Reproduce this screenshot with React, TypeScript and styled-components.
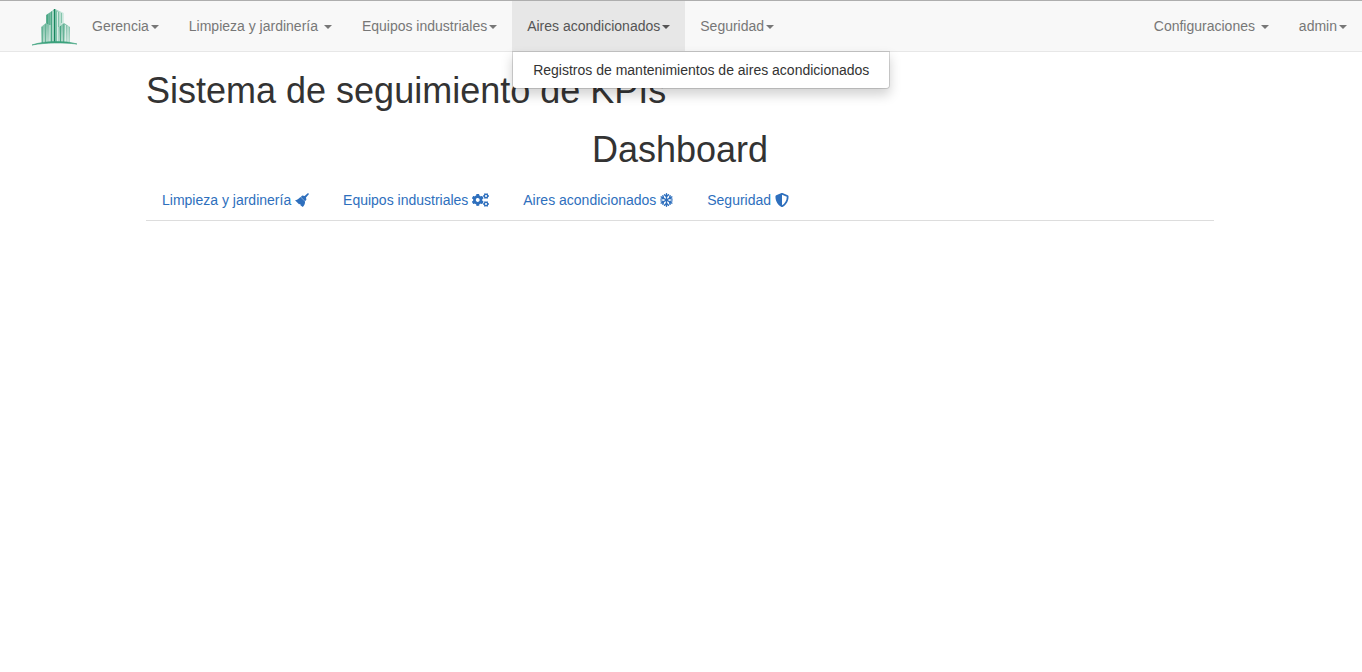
import React from "react";
import styled, { createGlobalStyle, css } from "styled-components";
import { FaCogs, FaShieldAlt } from "react-icons/fa";

const GlobalStyle = createGlobalStyle`
  *, *::before, *::after { box-sizing: border-box; }
  body {
    margin: 0;
    background: #fff;
    color: #333;
    font-family: "Helvetica Neue", Helvetica, "Liberation Sans", Arial, sans-serif;
    font-size: 14px;
    line-height: 20px;
  }
`;

const Navbar = styled.nav`
  display: flex;
  justify-content: space-between;
  background: #f8f8f8;
  border-top: 1px solid #aeaeae;
  border-bottom: 1px solid #e7e7e7;
`;

const NavGroup = styled.div`
  display: flex;
`;

const Brand = styled.a`
  display: block;
  height: 50px;
  padding: 7px 0 0 32px;

  svg {
    display: block;
  }
`;

const MenuList = styled.ul`
  display: flex;
  margin: 0;
  padding: 0;
  list-style: none;
`;

const MenuItem = styled.li`
  position: relative;
`;

const MenuToggle = styled.button<{ $open?: boolean }>`
  display: block;
  height: 50px;
  padding: 15px;
  border: 0;
  background: transparent;
  color: #777;
  font: inherit;
  white-space: pre;
  cursor: pointer;

  &:hover {
    color: #333;
  }

  ${(p) =>
    p.$open &&
    css`
      background: #e7e7e7;
      color: #555;
    `}
`;

const Caret = styled.span`
  display: inline-block;
  margin-left: 2px;
  vertical-align: middle;
  border-top: 4px solid;
  border-right: 4px solid transparent;
  border-left: 4px solid transparent;
`;

const Dropdown = styled.ul`
  position: absolute;
  top: 100%;
  left: 0;
  z-index: 10;
  margin: 0;
  padding: 5px 0;
  list-style: none;
  background: #fff;
  background-clip: padding-box;
  border: 1px solid rgba(0, 0, 0, 0.15);
  border-radius: 0 0 4px 4px;
  box-shadow: 0 6px 12px rgba(0, 0, 0, 0.175);
`;

const DropdownLink = styled.a`
  display: block;
  padding: 3px 20px;
  color: #333;
  text-decoration: none;
  white-space: nowrap;
`;

const Main = styled.main`
  padding: 19px 148px 0 146px;
`;

const Title = styled.h1<{ $centered?: boolean }>`
  margin: 0 0 ${(p) => (p.$centered ? 10 : 20)}px;
  font-size: 36px;
  line-height: 39px;
  font-weight: 400;
  text-align: ${(p) => (p.$centered ? "center" : "left")};
`;

const Tabs = styled.ul`
  display: flex;
  gap: 2px;
  margin: 0;
  padding: 0;
  list-style: none;
  border-bottom: 1px solid #ddd;
`;

const TabLink = styled.a<{ $iconWidth: number }>`
  display: block;
  padding: 10px 15px;
  border: 1px solid transparent;
  border-bottom: 0;
  color: #2e6fbd;
  text-decoration: none;
  white-space: nowrap;

  svg {
    width: ${(p) => p.$iconWidth}px;
    height: 14px;
    vertical-align: -2px;
  }
`;

const Logo = () => (
  <svg width="45" height="38" viewBox="0 0 45 38" aria-hidden="true">
    <defs>
      <linearGradient id="side" x1="0" y1="0" x2="0" y2="1">
        <stop offset="0" stopColor="#7dbfa7" />
        <stop offset="1" stopColor="#b9dccf" />
      </linearGradient>
      <linearGradient id="tower" x1="0" y1="0" x2="1" y2="0">
        <stop offset="0" stopColor="#5db193" />
        <stop offset="0.500" stopColor="#8ecab5" />
        <stop offset="1" stopColor="#dceee7" />
      </linearGradient>
    </defs>
    <path d="M14 7 23 1 32 5V35H14Z" fill="url(#tower)" />
    <path d="M9 19 14 15 18 17V35H9Z" fill="url(#side)" />
    <path d="M27 19 32 15 38 19V35H27Z" fill="url(#side)" />
    <g fill="none" strokeWidth="1">
      <path d="M22.500 1V35" stroke="#17875f" strokeWidth="1.400" />
      <path d="M15.500 6.500V16M19.500 3.500V35M28.500 18V35" stroke="#4aa684" />
      <path d="M10.500 19V35M13.500 16V35M17.500 5V17M31.500 16V35" stroke="#66b397" />
      <path d="M24.500 3V35M26.500 4V19M29.500 5V15" stroke="#73bca1" strokeWidth="0.800" />
      <path d="M18 17V35M21 3V35M25.500 4V35M33.500 17V35M36 18V35" stroke="#e3f2ec" strokeWidth="0.800" />
    </g>
    <path d="M0 37C11 33 32 32 45 36C31 34.500 14 34.500 0 37Z" fill="#3ba17c" stroke="#3ba17c" strokeWidth="0.600" />
  </svg>
);

const BroomIcon = () => (
  <svg viewBox="0 0 14 14" fill="currentColor" aria-hidden="true">
    <path d="M13 0 14 1 11 4.400 11.400 6.800 10 8.200 5.800 4 7.200 2.600 9.600 3Z" />
    <path d="M5.400 4 10 8.600C10.200 10.800 9.300 12.800 7.800 14L5.400 12.300 5.300 11 4 11.200 0 7.300C2 7.200 3.700 6 5.400 4Z" />
  </svg>
);

const snowflakeAngles = [0, 60, 120, 180, 240, 300];

const SnowflakeIcon = () => (
  <svg viewBox="0 0 13 14" fill="none" stroke="currentColor" strokeWidth="1.400" strokeLinecap="round" strokeLinejoin="round" aria-hidden="true">
    {snowflakeAngles.map((angle) => (
      <path key={angle} d="M6.500 7V0.800M4.500 1.700 6.500 3.700 8.500 1.700" transform={`rotate(${angle} 6.500 7)`} />
    ))}
  </svg>
);

const menus = [
  { label: "Gerencia" },
  { label: "Limpieza y jardinería " },
  { label: "Equipos industriales" },
  { label: "Aires acondicionados", items: ["Registros de mantenimientos de aires acondicionados"] },
  { label: "Seguridad" },
];

const userMenus = [{ label: "Configuraciones " }, { label: "admin" }];

const tabs = [
  { label: "Limpieza y jardinería", Icon: BroomIcon, iconWidth: 14 },
  { label: "Equipos industriales", Icon: FaCogs, iconWidth: 17 },
  { label: "Aires acondicionados", Icon: SnowflakeIcon, iconWidth: 13 },
  { label: "Seguridad", Icon: FaShieldAlt, iconWidth: 14 },
];

const Menu = ({ entries }: { entries: { label: string; items?: string[] }[] }) => (
  <MenuList>
    {entries.map(({ label, items }) => (
      <MenuItem key={label}>
        <MenuToggle type="button" aria-haspopup="true" aria-expanded={!!items} $open={!!items}>
          {label}
          <Caret />
        </MenuToggle>
        {items && (
          <Dropdown>
            {items.map((item) => (
              <li key={item}>
                <DropdownLink href="#">{item}</DropdownLink>
              </li>
            ))}
          </Dropdown>
        )}
      </MenuItem>
    ))}
  </MenuList>
);

export default function App() {
  return (
    <>
      <GlobalStyle />
      <Navbar>
        <NavGroup>
          <Brand href="#" aria-label="Inicio">
            <Logo />
          </Brand>
          <Menu entries={menus} />
        </NavGroup>
        <Menu entries={userMenus} />
      </Navbar>
      <Main>
        <Title>Sistema de seguimiento de KPIs</Title>
        <Title $centered>Dashboard</Title>
        <Tabs>
          {tabs.map(({ label, Icon, iconWidth }) => (
            <li key={label}>
              <TabLink href="#" $iconWidth={iconWidth}>
                {label} <Icon />
              </TabLink>
            </li>
          ))}
        </Tabs>
      </Main>
    </>
  );
}
